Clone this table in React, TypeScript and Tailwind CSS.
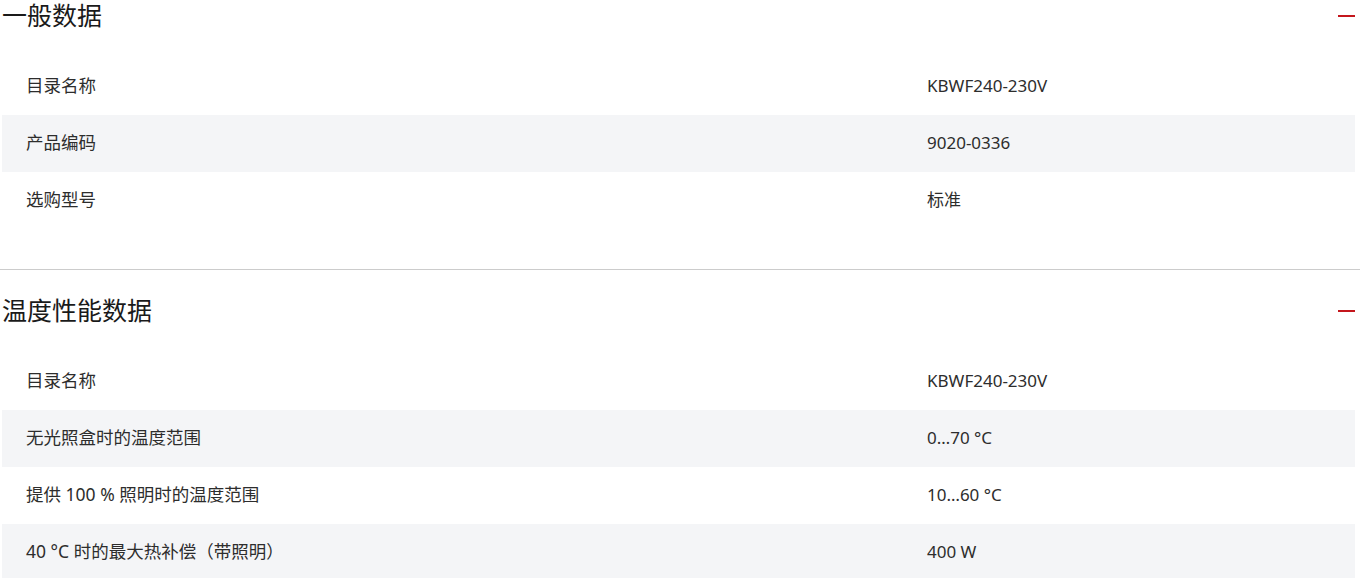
import React from 'react';

type Row = { label: string; value: string };

const sections: { title: string; rows: Row[] }[] = [
  {
    title: '一般数据',
    rows: [
      { label: '目录名称', value: 'KBWF240-230V' },
      { label: '产品编码', value: '9020-0336' },
      { label: '选购型号', value: '标准' },
    ],
  },
  {
    title: '温度性能数据',
    rows: [
      { label: '目录名称', value: 'KBWF240-230V' },
      { label: '无光照盒时的温度范围', value: '0…70 °C' },
      { label: '提供 100 % 照明时的温度范围', value: '10…60 °C' },
      { label: '40 °C 时的最大热补偿（带照明）', value: '400 W' },
    ],
  },
];

const Section: React.FC<{ title: string; rows: Row[]; first?: boolean }> = ({ title, rows, first }) => (
  <section className={`border-b border-[#cccccc] ${first ? 'pb-[40px]' : 'pt-[25px] pb-[40px]'}`}>
    <div className="pl-[2px] pr-[5px]">
      {/* Header */}
      <div className="flex items-center justify-between h-[31px]">
        <h2 className="text-[25px] leading-[31px] text-[#1a1a1a] font-normal">{title}</h2>
        <span className="block w-[17px] h-[2px] bg-[#c4161c]" />
      </div>

      {/* Rows */}
      <div className="mt-[27px]">
        {rows.map((row, i) => (
          <div
            key={row.label + i}
            className={`flex items-center h-[57px] pb-[2px] text-[#2d2d2d] ${i % 2 === 1 ? 'bg-[#f4f5f7]' : ''}`}
          >
            <div className="w-[925px] pl-[24px] text-[17.5px]">{row.label}</div>
            <div className="flex-1 text-[17px]">{row.value}</div>
          </div>
        ))}
      </div>
    </div>
  </section>
);

export default function App() {
  return (
    <div
      className="w-[1360px] bg-white"
      style={{ fontFamily: '"Noto Sans", "Noto Sans CJK SC", sans-serif' }}
    >
      {sections.map((s, i) => (
        <Section key={s.title} title={s.title} rows={s.rows} first={i === 0} />
      ))}
    </div>
  );
}
